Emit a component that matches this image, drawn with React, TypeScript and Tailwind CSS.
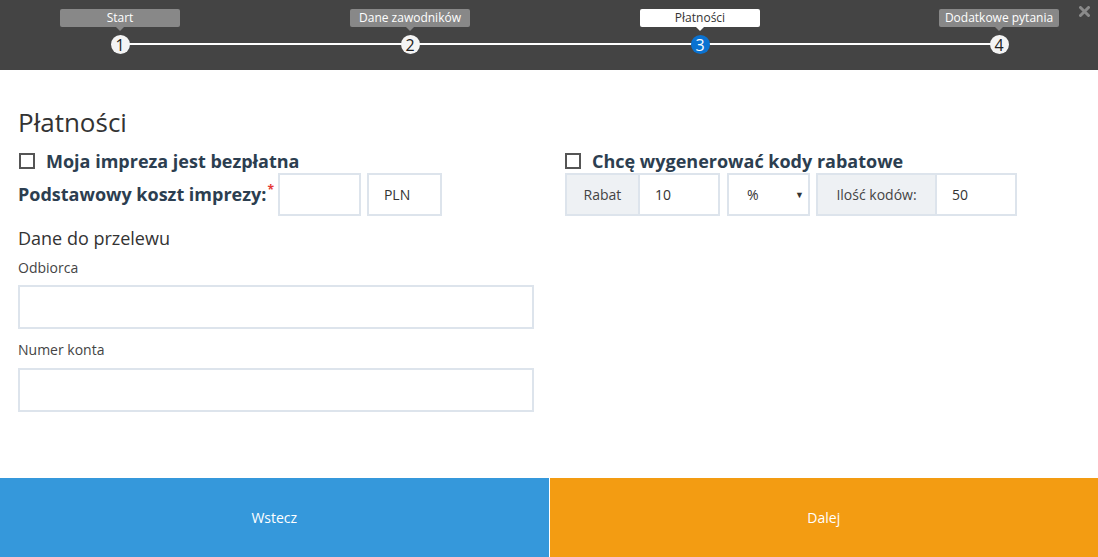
import React from 'react';

const steps = [
  { n: 1, label: 'Start', state: 'done' },
  { n: 2, label: 'Dane zawodników', state: 'todo' },
  { n: 3, label: 'Płatności', state: 'active' },
  { n: 4, label: 'Dodatkowe pytania', state: 'todo' },
];

const Step: React.FC<{ n: number; label: string; state: string; className?: string }> = ({ n, label, state, className }) => {
  const active = state === 'active';
  return (
    <div className={`flex w-[120px] flex-col items-center ${className ?? ''}`}>
      <div
        className={`relative flex h-[18px] w-full items-center justify-center rounded-[2px] text-[12px] leading-none ${
          active ? 'bg-white text-[#333]' : 'bg-[#888] text-white'
        }`}
      >
        {label}
        <span
          className={`absolute -bottom-[4px] left-1/2 h-0 w-0 -translate-x-1/2 border-x-[4px] border-t-[4px] border-x-transparent ${
            active ? 'border-t-white' : 'border-t-[#888]'
          }`}
        />
      </div>
      <div
        className={`relative z-10 mt-[8px] flex h-[19px] w-[19px] items-center justify-center rounded-full text-[16px] leading-none ${
          active ? 'bg-[#0a72d1] text-white' : 'bg-[#f4f4f4] text-[#222]'
        } ${state === 'done' ? 'text-[#4b1490]' : ''}`}
      >
        {n}
      </div>
    </div>
  );
};

const Checkbox: React.FC = () => (
  <span className="inline-block h-[16px] w-[16px] shrink-0 border-2 border-[#555] bg-white" />
);

export default function App() {
  return (
    <div className="flex h-screen flex-col bg-white" style={{ fontFamily: '"Open Sans", "Noto Sans", sans-serif' }}>
      {/* Wizard header */}
      <div className="relative h-[70px] shrink-0 bg-[#444]">
        <div className="absolute left-[120px] top-[43px] h-[2px] w-[879px] bg-white" />
        <div className="flex pl-[60px] pt-[9px]">
          <Step {...steps[0]} />
          <Step {...steps[1]} className="ml-[170px]" />
          <Step {...steps[2]} className="ml-[170px]" />
          <Step {...steps[3]} className="ml-[179px]" />
        </div>
        <svg className="absolute right-[8px] top-[6px]" width="11" height="11" viewBox="0 0 11 11">
          <path d="M1.5 1.5 L9.5 9.5 M9.5 1.5 L1.5 9.5" stroke="#8a8a8a" strokeWidth="3" strokeLinecap="round" />
        </svg>
      </div>

      {/* Content */}
      <div className="flex-1 px-[18px] pt-[36px]">
        <h1 className="text-[26px] font-normal leading-[32px] text-[#333]">Płatności</h1>
        <div className="mt-[12px] flex">
          <div className="w-[516px]">
            <label className="flex items-center gap-[11px] pl-[1px] text-[18px] font-bold leading-[22px] text-[#2c3e50]">
              <Checkbox />
              Moja impreza jest bezpłatna
            </label>
            <div className="mt-[1px] flex items-center">
              <span className="text-[18px] font-bold text-[#2c3e50]">Podstawowy koszt imprezy:</span>
              <span className="mb-[10px] ml-[1px] text-[12px] font-bold text-[#e53935]">*</span>
              <input className="ml-[4px] h-[43px] w-[83px] border-2 border-[#dde4ec] outline-none" />
              <div className="ml-[6px] flex h-[43px] w-[75px] items-center border-2 border-[#dde4ec] pl-[15px] text-[14px] text-[#333]">PLN</div>
            </div>
            <div className="mt-[10px] text-[18px] leading-[24px] text-[#333]">Dane do przelewu</div>
            <div className="mt-[8px] text-[14px] leading-[20px] text-[#444]">Odbiorca</div>
            <input className="mt-[7px] block h-[44px] w-[516px] border-2 border-[#dde4ec] outline-none" />
            <div className="mt-[11px] text-[14px] leading-[20px] text-[#444]">Numer konta</div>
            <input className="mt-[8px] block h-[44px] w-[516px] border-2 border-[#dde4ec] outline-none" />
          </div>

          <div className="ml-[31px]">
            <label className="flex items-center gap-[11px] text-[18px] font-bold leading-[22px] text-[#2c3e50]">
              <Checkbox />
              Chcę wygenerować kody rabatowe
            </label>
            <div className="mt-[1px] flex h-[43px] text-[14px] text-[#333]">
              <div className="flex w-[73px] items-center justify-center border-2 border-r-0 border-[#dde4ec] bg-[#eef1f4] text-[#444]">Rabat</div>
              <div className="flex w-[82px] items-center border-2 border-[#dde4ec] pl-[15px]">10</div>
              <div className="ml-[7px] flex w-[83px] items-center justify-between border-2 border-[#dde4ec] pl-[18px] pr-[4px]">
                <span>%</span>
                <span className="text-[9px]">▼</span>
              </div>
              <div className="ml-[6px] flex w-[119px] items-center justify-center border-2 border-r-0 border-[#dde4ec] bg-[#eef1f4] text-[#444]">Ilość kodów:</div>
              <div className="flex w-[82px] items-center border-2 border-[#dde4ec] pl-[15px]">50</div>
            </div>
          </div>
        </div>
      </div>

      {/* Footer buttons */}
      <div className="flex h-[79px] shrink-0">
        <button className="flex-1 bg-[#3598db] text-[14px] text-white">Wstecz</button>
        <div className="w-[1px] bg-white" />
        <button className="flex-1 bg-[#f39c12] text-[14px] text-white">Dalej</button>
      </div>
    </div>
  );
}
